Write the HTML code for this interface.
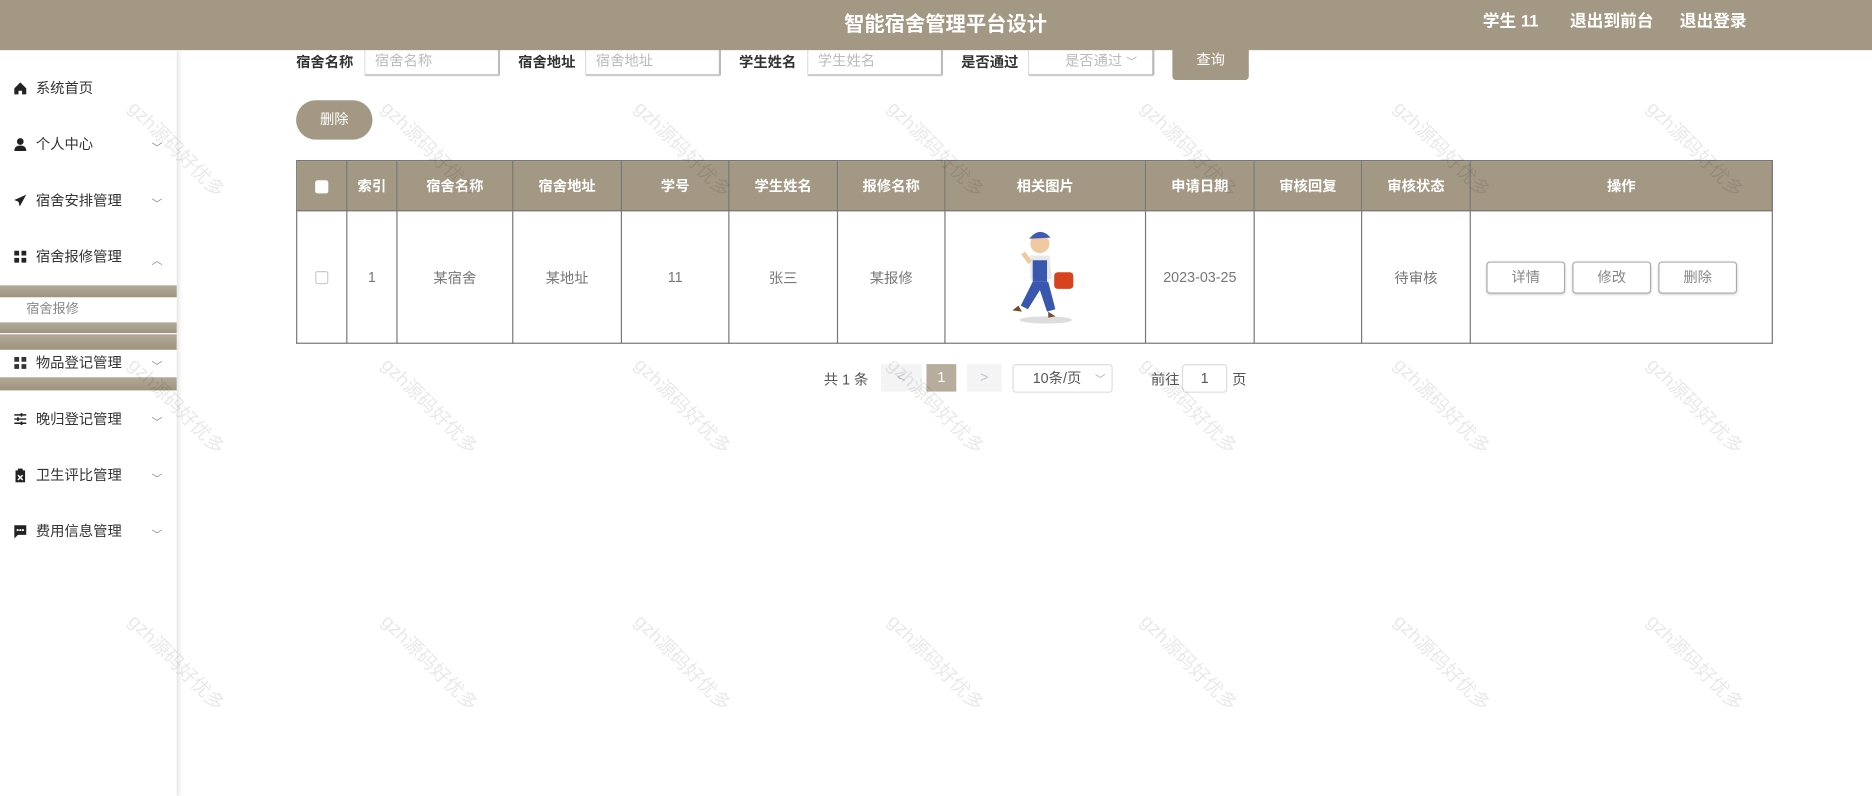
<!DOCTYPE html>
<html><head><meta charset="utf-8"><style>
*{margin:0;padding:0;box-sizing:border-box}
html,body{width:1872px;height:796px;overflow:hidden;background:#fff}
#w{position:absolute;left:0;top:0;width:1568px;height:667px;transform:scale(1.19388);transform-origin:0 0;font-family:"Liberation Sans","Noto Sans CJK SC",sans-serif;color:#333}
.a{position:absolute}
.hdr{left:0;top:0;width:1568px;height:42px;background:#a39884;color:#fff;font-weight:bold}
.side{left:0;top:42px;width:148px;height:625px;background:#fff;box-shadow:2px 0 4px rgba(0,0,0,.12)}
.mi{position:absolute;left:0;width:148px;height:20px;font-size:12px;color:#333;line-height:20px}
.mi .t{position:absolute;left:30px}
.mi .ic{position:absolute;left:11px;top:4px;width:12px;height:12px}
.mi .ch{position:absolute;left:127px;top:3px;font-size:9px;color:#888}
.bar{position:absolute;left:0;width:148px;background:linear-gradient(#b2a998,#9e947f)}
.lbl{font-size:12px;font-weight:bold;color:#333}
.inp{height:26px;border:1px solid #ddd;border-bottom:2px solid #ccc;border-right:2px solid #bbb;background:#fff;font-size:12px;color:#bbb;line-height:24px;padding-left:8px;border-radius:2px}
.btn{background:#a39884;color:#fff;font-size:12px;text-align:center}
table{border-collapse:collapse;position:absolute;left:248px;top:134px;width:1237px}
td,th{border:1px solid #777;text-align:center;font-size:12px}
th{background:#a39884;color:#fff;height:42px;font-weight:bold}
td{height:111px;color:#777}
.ob{display:inline-block;width:66px;height:27px;border:1px solid #aaa;border-radius:3px;line-height:25px;color:#888;margin:0 3px;box-shadow:0 1px 2px rgba(0,0,0,.15);text-align:center}
.wm{position:absolute;font-size:16px;color:rgba(0,0,0,.09);transform:rotate(45deg);transform-origin:0 0;white-space:nowrap}
</style></head><body><div id="w">

<div class="a side">
<div class="mi" style="top:22px"><svg class="ic" viewBox="0 0 12 12"><path d="M1 6 6 1 11 6V11H7.5V8H4.5V11H1Z" fill="#222"/></svg><span class="t">系统首页</span></div>
<div class="mi" style="top:69px"><svg class="ic" viewBox="0 0 12 12"><circle cx="6" cy="3.5" r="2.8" fill="#222"/><path d="M1 11.5C1 8 3 7 6 7S11 8 11 11.5Z" fill="#222"/></svg><span class="t">个人中心</span><span class="ch">﹀</span></div>
<div class="mi" style="top:116px"><svg class="ic" viewBox="0 0 12 12"><path d="M11 1 1 5.5 4.5 7 5.5 11Z" fill="#222"/></svg><span class="t">宿舍安排管理</span><span class="ch">﹀</span></div>
<div class="mi" style="top:163px"><svg class="ic" viewBox="0 0 12 12"><path d="M1 1h4v4H1zM7 1h4v4H7zM1 7h4v4H1zM7 7h4v4H7z" fill="#222"/></svg><span class="t">宿舍报修管理</span><span class="ch">︿</span></div>
<div class="bar" style="top:197px;height:10px"></div>
<div class="mi" style="top:207px;color:#888;font-size:11px"><span class="t" style="left:22px">宿舍报修</span></div>
<div class="bar" style="top:228px;height:9px"></div>
<div class="bar" style="top:238px;height:13px"></div>
<div class="mi" style="top:252px"><svg class="ic" viewBox="0 0 12 12"><path d="M1 1h4v4H1zM7 1h4v4H7zM1 7h4v4H1zM7 7h4v4H7z" fill="#333"/></svg><span class="t">物品登记管理</span><span class="ch">﹀</span></div>
<div class="bar" style="top:274px;height:11px"></div>
<div class="mi" style="top:299px"><svg class="ic" viewBox="0 0 12 12"><path d="M1 2.5h10M1 6h10M1 9.5h10" stroke="#222" stroke-width="1.2"/><path d="M7 1v3M4 4.5v3M7 8v3" stroke="#222" stroke-width="1.5"/></svg><span class="t">晚归登记管理</span><span class="ch">﹀</span></div>
<div class="mi" style="top:346px"><svg class="ic" viewBox="0 0 12 12"><path d="M2 2h8v10H2z" fill="#222"/><rect x="4" y="0.5" width="4" height="2.5" fill="#222"/><path d="M4 6l4 4M8 6l-4 4" stroke="#fff" stroke-width="1.2"/></svg><span class="t">卫生评比管理</span><span class="ch">﹀</span></div>
<div class="mi" style="top:393px"><svg class="ic" viewBox="0 0 12 12"><path d="M1 1h10v8H4l-3 3z" fill="#222"/><circle cx="3.8" cy="5" r=".9" fill="#fff"/><circle cx="6" cy="5" r=".9" fill="#fff"/><circle cx="8.2" cy="5" r=".9" fill="#fff"/></svg><span class="t">费用信息管理</span><span class="ch">﹀</span></div>
</div>

<div class="a lbl" style="left:248px;top:43px">宿舍名称</div>
<div class="a inp" style="left:305px;top:38px;width:114px">宿舍名称</div>
<div class="a lbl" style="left:434px;top:43px">宿舍地址</div>
<div class="a inp" style="left:490px;top:38px;width:114px">宿舍地址</div>
<div class="a lbl" style="left:619px;top:43px">学生姓名</div>
<div class="a inp" style="left:676px;top:38px;width:114px">学生姓名</div>
<div class="a lbl" style="left:805px;top:43px">是否通过</div>
<div class="a inp" style="left:861px;top:38px;width:106px;padding-left:30px">是否通过 <span style="font-size:9px;color:#aaa">﹀</span></div>
<div class="a btn" style="left:982px;top:36px;width:64px;height:31px;line-height:29px;border-radius:0 0 3px 3px">查询</div>
<div class="a btn" style="left:248px;top:84px;width:64px;height:33px;line-height:33px;border-radius:17px">删除</div>

<table>
<tr><th style="width:42px"><span style="display:inline-block;width:11px;height:11px;background:#fff;border-radius:2px;vertical-align:middle"></span></th><th style="width:42px">索引</th><th style="width:97px">宿舍名称</th><th style="width:91px">宿舍地址</th><th style="width:90px">学号</th><th style="width:91px">学生姓名</th><th style="width:90px">报修名称</th><th style="width:168px">相关图片</th><th style="width:91px">申请日期</th><th style="width:90px">审核回复</th><th style="width:91px">审核状态</th><th>操作</th></tr>
<tr><td><span style="display:inline-block;width:11px;height:11px;border:1px solid #ccc;border-radius:2px;vertical-align:middle"></span></td><td>1</td><td>某宿舍</td><td>某地址</td><td>11</td><td>张三</td><td>某报修</td>
<td><svg width="70" height="82" viewBox="0 0 70 82"><ellipse cx="35" cy="78" rx="22" ry="3" fill="#ddd"/><circle cx="30" cy="14" r="8" fill="#f1c9a0"/><path d="M21 10q9-11 18-1z" fill="#3d5bb5"/><path d="M22 24h16l2 20H22z" fill="#e8e8e8"/><path d="M24 28h12v18H24z" fill="#3a57b0"/><path d="M24 46l-10 20 6 3 10-16 6 18 7-2-6-23z" fill="#3a57b0"/><path d="M12 66l-5 4 8 1z M37 71l6 4-6 1z" fill="#7a4a2a"/><rect x="42" y="38" width="16" height="14" rx="3" fill="#d8431f"/><path d="M16 22l6 8" stroke="#f1c9a0" stroke-width="4"/></svg></td>
<td>2023-03-25</td><td></td><td>待审核</td><td style="text-align:left;padding-left:10px"><span class="ob">详情</span><span class="ob">修改</span><span class="ob">删除</span></td></tr>
</table>

<div class="a" style="left:690px;top:309px;font-size:12px;color:#555">共 1 条</div>
<div class="a" style="left:738px;top:305px;width:34px;height:23px;background:#f4f4f5;color:#c0c4cc;font-size:12px;text-align:center;line-height:23px">&lt;</div>
<div class="a" style="left:776px;top:305px;width:25px;height:23px;background:#b7ad9c;color:#fff;font-size:12px;text-align:center;line-height:23px">1</div>
<div class="a" style="left:810px;top:305px;width:29px;height:23px;background:#f4f4f5;color:#c0c4cc;font-size:12px;text-align:center;line-height:23px">&gt;</div>
<div class="a" style="left:848px;top:305px;width:84px;height:24px;border:1px solid #ddd;border-radius:3px;font-size:12px;color:#555;line-height:22px;padding-left:16px">10条/页 <span style="font-size:9px;color:#aaa;margin-left:8px">﹀</span></div>
<div class="a" style="left:964px;top:309px;font-size:12px;color:#555">前往</div>
<div class="a" style="left:990px;top:305px;width:38px;height:24px;border:1px solid #ddd;border-radius:3px;font-size:12px;color:#555;line-height:22px;text-align:center">1</div>
<div class="a" style="left:1032px;top:309px;font-size:12px;color:#555">页</div>

<div class="a hdr"><div class="a" style="left:0;width:1584px;top:6px;text-align:center;font-size:17px">智能宿舍管理平台设计</div>
<div class="a" style="left:1242px;top:7px;font-size:14px">学生 11</div>
<div class="a" style="left:1315px;top:7px;font-size:14px">退出到前台</div>
<div class="a" style="left:1407px;top:7px;font-size:14px">退出登录</div></div>

<div class="wm" style="left:120px;top:78px">gzh源码好优多</div><div class="wm" style="left:332px;top:78px">gzh源码好优多</div><div class="wm" style="left:544px;top:78px">gzh源码好优多</div><div class="wm" style="left:756px;top:78px">gzh源码好优多</div><div class="wm" style="left:968px;top:78px">gzh源码好优多</div><div class="wm" style="left:1180px;top:78px">gzh源码好优多</div><div class="wm" style="left:1392px;top:78px">gzh源码好优多</div>
<div class="wm" style="left:120px;top:293px">gzh源码好优多</div><div class="wm" style="left:332px;top:293px">gzh源码好优多</div><div class="wm" style="left:544px;top:293px">gzh源码好优多</div><div class="wm" style="left:756px;top:293px">gzh源码好优多</div><div class="wm" style="left:968px;top:293px">gzh源码好优多</div><div class="wm" style="left:1180px;top:293px">gzh源码好优多</div><div class="wm" style="left:1392px;top:293px">gzh源码好优多</div>
<div class="wm" style="left:120px;top:508px">gzh源码好优多</div><div class="wm" style="left:332px;top:508px">gzh源码好优多</div><div class="wm" style="left:544px;top:508px">gzh源码好优多</div><div class="wm" style="left:756px;top:508px">gzh源码好优多</div><div class="wm" style="left:968px;top:508px">gzh源码好优多</div><div class="wm" style="left:1180px;top:508px">gzh源码好优多</div><div class="wm" style="left:1392px;top:508px">gzh源码好优多</div>
</div></body></html>
